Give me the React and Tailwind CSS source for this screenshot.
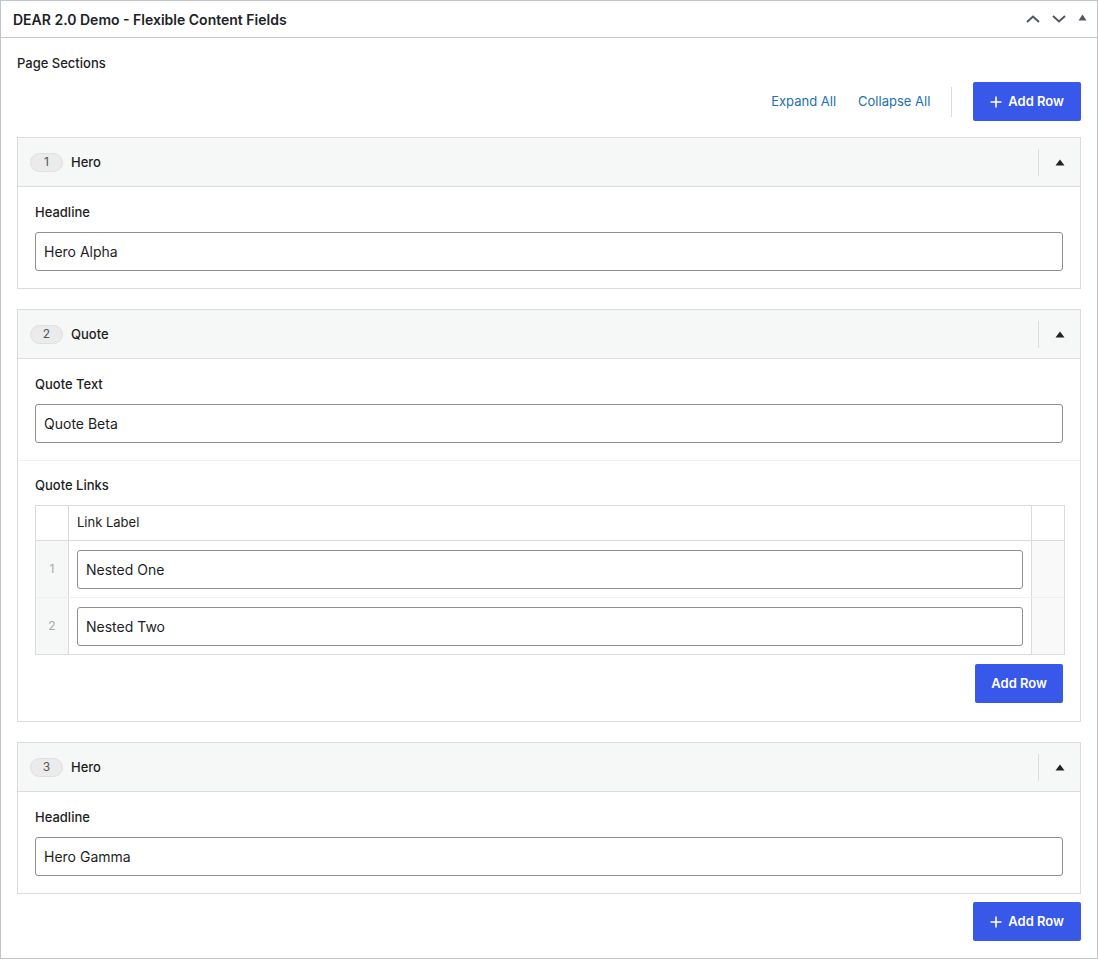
import React from "react";

const font = { fontFamily: "Inter, 'Noto Sans', sans-serif" };

function PlusIcon() {
  return (
    <svg width="12" height="12" viewBox="0 0 12 12" className="shrink-0">
      <path d="M6 0.5v11M0.5 6h11" stroke="white" strokeWidth="1.6" />
    </svg>
  );
}

function AddRowButton({ plus }) {
  return (
    <button
      className={
        plus
          ? "flex h-[39px] items-center justify-center gap-[6px] rounded-[2px] bg-[#3858e9] px-[17px] text-[13px] font-semibold text-white"
          : "flex h-[39px] items-center justify-center rounded-[2px] bg-[#3858e9] px-[16px] text-[13px] font-semibold text-white"
      }
    >
      {plus && <PlusIcon />}
      <span>Add Row</span>
    </button>
  );
}

function TextInput({ value }) {
  return (
    <div className="flex h-[39px] w-full items-center rounded-[3px] border border-[#8c8f94] bg-white px-[8px] text-[14px] text-[#1e1e1e]">
      {value}
    </div>
  );
}

function Field({ label, children, divider }) {
  return (
    <div className={divider ? "border-t border-[#f0f0f0] px-[17px] pb-[18px] pt-[15px]" : "px-[17px] pb-[17px] pt-[16px]"}>
      <div className="mb-[11px] text-[13px] font-medium leading-[18px] text-[#1e1e1e]">{label}</div>
      {children}
    </div>
  );
}

function Layout({ index, name, children }) {
  return (
    <div className="border border-[#dcdcde] bg-white">
      <div className="flex h-[49px] items-center border-b border-[#dcdcde] bg-[#f6f7f7]">
        <div className="ml-[12px] flex h-[19px] w-[33px] items-center justify-center rounded-full border border-[#e0e0e0] bg-[#ebebeb] text-[12px] text-[#50575e]">
          {index}
        </div>
        <div className="ml-[8px] pt-px text-[13px] font-medium text-[#1e1e1e]">{name}</div>
        <div className="ml-auto flex h-[27px] w-[42px] items-center justify-center border-l border-[#dcdcde]">
          <svg width="10" height="7" viewBox="0 0 10 7">
            <path d="M5 0.5L9.5 6.5H0.5Z" fill="#1d2327" />
          </svg>
        </div>
      </div>
      {children}
    </div>
  );
}

function RepeaterTable() {
  const rows = ["Nested One", "Nested Two"];
  return (
    <div className="mr-[-2px] border border-[#dcdcde] text-[13px]">
      <div className="flex h-[35px] border-b border-[#dcdcde]">
        <div className="w-[33px] border-r border-[#dcdcde]" />
        <div className="flex flex-1 items-center px-[8px] text-[#1e1e1e]">Link Label</div>
        <div className="w-[33px] border-l border-[#dcdcde]" />
      </div>
      {rows.map((r, i) => (
        <div key={r} className={i > 0 ? "flex h-[57px] border-t border-[#f0f0f0]" : "flex h-[56px]"}>
          <div className="flex w-[33px] items-center justify-center border-r border-[#dcdcde] bg-[#f6f7f7] text-[12px] text-[#a7aaad]">
            {i + 1}
          </div>
          <div className="flex flex-1 items-center px-[8px]">
            <TextInput value={r} />
          </div>
          <div className="w-[33px] border-l border-[#dcdcde] bg-[#f9f9f9]" />
        </div>
      ))}
    </div>
  );
}

export default function App() {
  return (
    <div style={font} className="w-[1098px] bg-white">
      <div className="border border-[#c3c4c7] bg-white">
        <div className="flex h-[37px] items-center border-b border-[#c3c4c7] pl-[12px] pr-[10px]">
          <h2 className="text-[14px] font-semibold text-[#1d2327]">DEAR 2.0 Demo - Flexible Content Fields</h2>
          <div className="ml-auto flex items-center">
            <svg width="16" height="10" viewBox="0 0 16 10" className="mr-[10px]">
              <path d="M2 8L8 2.5L14 8" stroke="#50575e" strokeWidth="2" fill="none" />
            </svg>
            <svg width="16" height="10" viewBox="0 0 16 10" className="mr-[11px]">
              <path d="M2 2L8 7.5L14 2" stroke="#50575e" strokeWidth="2" fill="none" />
            </svg>
            <svg width="9" height="7" viewBox="0 0 9 7" className="mb-[3px]">
              <path d="M4.5 0.5L8.5 6.5H0.5Z" fill="#50575e" />
            </svg>
          </div>
        </div>

        <div className="px-[16px] pb-[17px] pt-[16px]">
          <div className="text-[13px] font-medium leading-[18px] text-[#1e1e1e]">Page Sections</div>

          <div className="mt-[10px] flex items-center justify-end">
            <span className="pt-px text-[13px] text-[#2271b1]">Expand All</span>
            <span className="ml-[22px] pt-px text-[13px] text-[#2271b1]">Collapse All</span>
            <div className="ml-[21px] h-[30px] w-px bg-[#dcdcde]" />
            <div className="ml-[21px]">
              <AddRowButton plus />
            </div>
          </div>

          <div className="mt-[16px] flex flex-col gap-[20px]">
            <Layout index={1} name="Hero">
              <Field label="Headline">
                <TextInput value="Hero Alpha" />
              </Field>
            </Layout>

            <Layout index={2} name="Quote">
              <Field label="Quote Text">
                <TextInput value="Quote Beta" />
              </Field>
              <Field label="Quote Links" divider>
                <RepeaterTable />
                <div className="mt-[9px] flex justify-end">
                  <AddRowButton />
                </div>
              </Field>
            </Layout>

            <Layout index={3} name="Hero">
              <Field label="Headline">
                <TextInput value="Hero Gamma" />
              </Field>
            </Layout>
          </div>

          <div className="mt-[8px] flex justify-end">
            <AddRowButton plus />
          </div>
        </div>
      </div>
    </div>
  );
}
